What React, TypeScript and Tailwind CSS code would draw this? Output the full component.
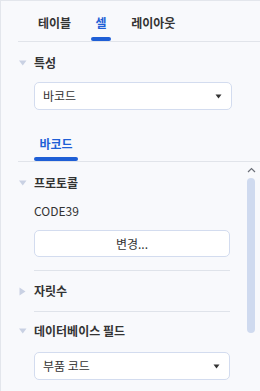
import React from 'react';

const DownTri = () => (
    <svg width="8" height="6" viewBox="0 0 8 6"><path d="M0 0.5 H7.5 L3.75 5.5 Z" fill="#c9d1e3" /></svg>
);

const RightTri = () => (
    <svg width="7" height="9" viewBox="0 0 7 9"><path d="M0.5 0.5 V8.5 L6.5 4.5 Z" fill="#c9d1e3" /></svg>
);

const Caret = () => (
    <svg width="7" height="5" viewBox="0 0 7 5"><path d="M0.5 0.5 H6.5 L3.5 4.5 Z" fill="#333" /></svg>
);

function Header({ label, open = true, className = '' }: { label: string; open?: boolean; className?: string }) {
    return (
        <div className={`flex items-center h-[16px] pl-[18px] ${className}`}>
            <div className="w-[15px] flex items-center">{open ? <DownTri /> : <RightTri />}</div>
            <span className="font-bold leading-[16px] text-[#333]">{label}</span>
        </div>
    );
}

function Select({ value, className = '' }: { value: string; className?: string }) {
    return (
        <div className={`flex items-center justify-between h-[28px] ml-[33px] bg-white border border-[#d3dcef] rounded-[5px] pl-[8px] pr-[9px] ${className}`}>
            <span className="leading-[16px] text-[#333]">{value}</span>
            <Caret />
        </div>
    );
}

export default function App() {
    const tabs = ['테이블', '셀', '레이아웃'];
    return (
        <div className="w-[260px] h-[391px] overflow-hidden bg-[#f8f9fc] border-t border-l border-[#e3e6ec] text-[12px] text-[#333] font-['Noto_Sans_CJK_KR','Noto_Sans',sans-serif]">
            {/* main tabs */}
            <div className="ml-[17px] h-[41px] border-b border-[#e1e4ea] flex gap-[20px] pl-[20px]">
                {tabs.map((t) => (
                    <div key={t} className="flex flex-col items-center h-full">
                        <span className={`mt-[14px] leading-[16px] font-bold ${t === '셀' ? 'text-[#1f5fd6]' : 'text-[#333]'}`}>{t}</span>
                        {t === '셀' && <div className="mt-auto w-[20px] h-[4px] rounded-full bg-[#1f5fd6]" />}
                    </div>
                ))}
            </div>

            <Header label="특성" className="mt-[13px]" />
            <Select value="바코드" className="mt-[11px] w-[198px]" />

            {/* sub tabs */}
            <div className="ml-[17px] mt-[12px] h-[40px] border-b border-[#e1e4ea] flex pl-[16px]">
                <div className="flex flex-col items-center w-[44px] h-full">
                    <span className="mt-[14px] leading-[16px] font-bold text-[#1f5fd6]">바코드</span>
                    <div className="mt-auto w-[44px] h-[4px] rounded-full bg-[#1f5fd6]" />
                </div>
            </div>

            {/* scroll area */}
            <div className="flex h-[229px]">
                <div className="flex-1">
                    <Header label="프로토콜" className="mt-[13px]" />
                    <div className="ml-[33px] mt-[12px] leading-[16px]">CODE39</div>
                    <button className="flex items-center justify-center ml-[33px] mt-[11px] w-[196px] h-[27px] bg-white border border-[#d3dcef] rounded-[5px] leading-[16px] text-[#333]">
                        변경...
                    </button>
                    <div className="ml-[33px] mt-[13px] w-[196px] h-px bg-[#dfe3ea]" />
                    <Header label="자릿수" open={false} className="mt-[12px]" />
                    <div className="ml-[33px] mt-[12px] w-[196px] h-px bg-[#dfe3ea]" />
                    <Header label="데이터베이스 필드" className="mt-[11px]" />
                    <Select value="부품 코드" className="mt-[13px] w-[196px]" />
                </div>
                <div className="w-[14px] mr-[2px] flex flex-col items-center">
                    <svg className="mt-[5px]" width="9" height="6" viewBox="0 0 9 6">
                        <path d="M1 5 L4.5 1.5 L8 5" fill="none" stroke="#6b6f78" strokeWidth="1.2" />
                    </svg>
                    <div className="mt-[5px] w-[8px] h-[155px] rounded-full bg-[#cfdaef]" />
                </div>
            </div>
        </div>
    );
}
